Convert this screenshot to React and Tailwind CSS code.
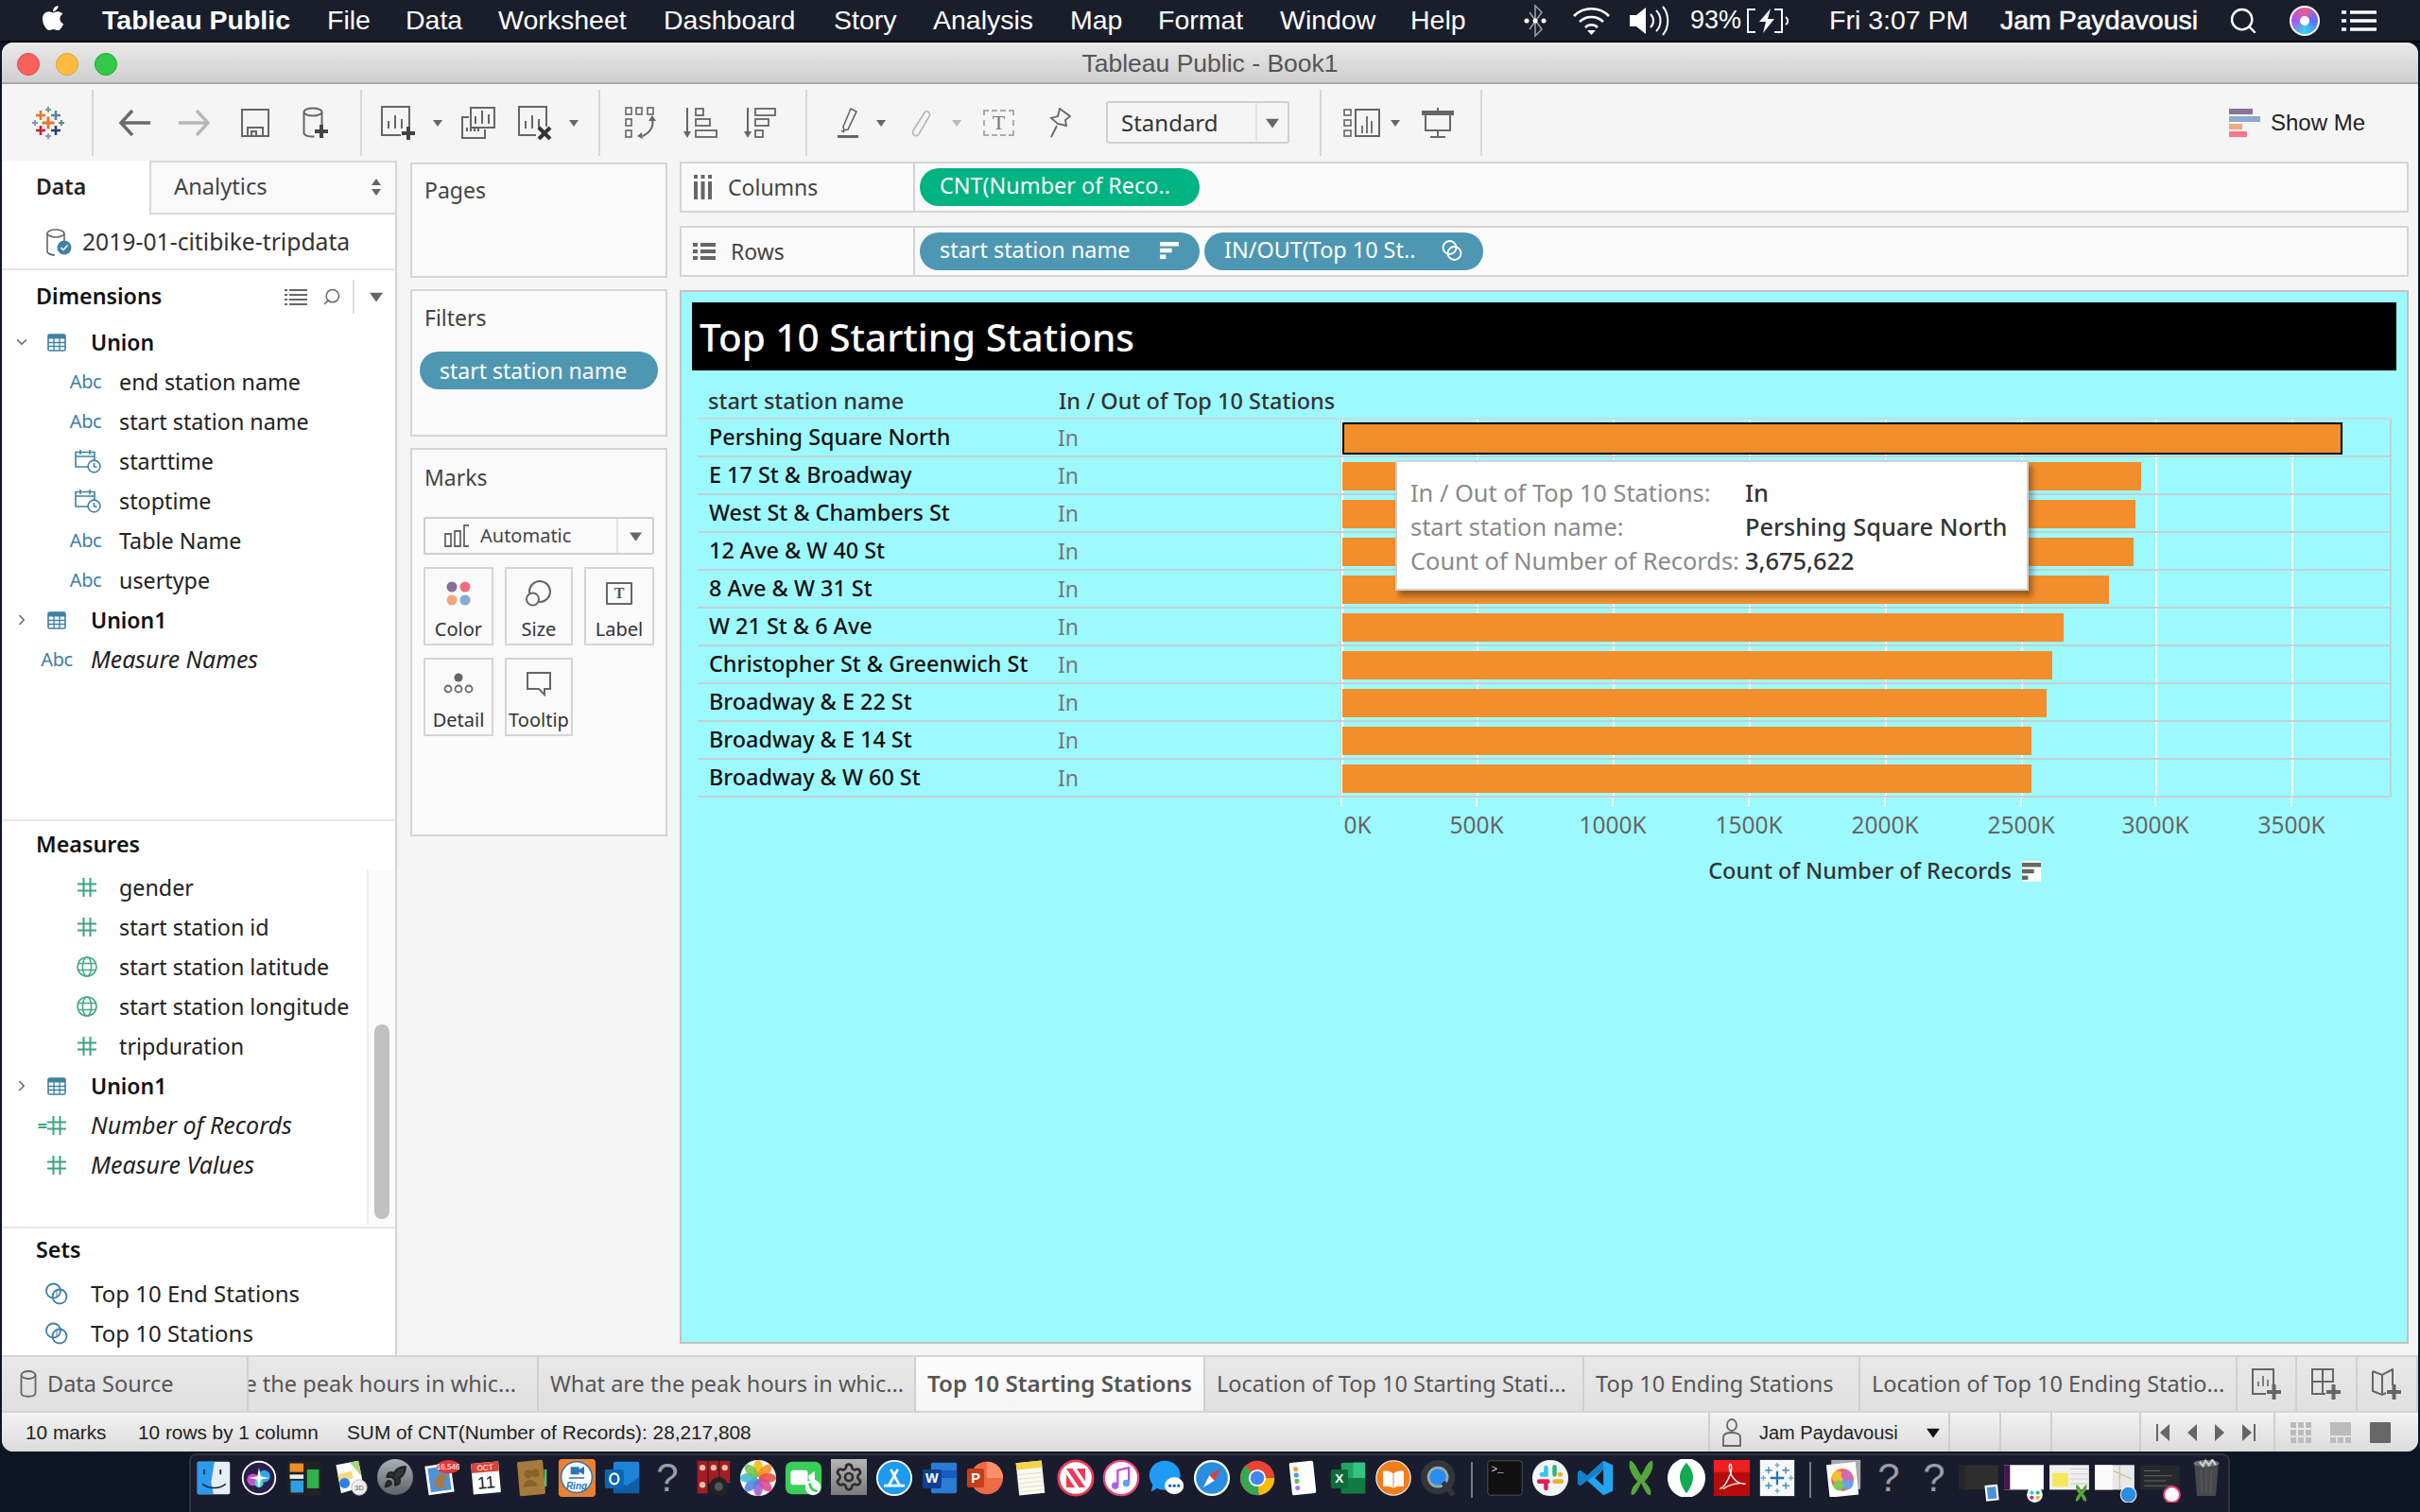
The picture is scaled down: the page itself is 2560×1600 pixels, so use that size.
import React from "react";
import { FaApple } from "react-icons/fa";
import { Search, Rocket, Settings, ChevronDown, ChevronRight } from "lucide-react";

const G = "#666";

function Caret({ c = "#666", s = 10 }) {
  return (
    <svg width={s} height={s} viewBox="0 0 10 10" className="shrink-0">
      <path d="M0 2h10L5 9z" fill={c} />
    </svg>
  );
}
function Sep() {
  return <div className="w-[2px] h-[70px] bg-[#d8d8d8] shrink-0" />;
}
function SortBars({ c = "#666", w = 22, h = 20 }) {
  return (
    <svg width={w} height={h} viewBox="0 0 22 20" className="shrink-0">
      <rect x="0" y="0" width="22" height="5" fill={c} />
      <rect x="0" y="7.5" width="14" height="5" fill={c} />
      <rect x="0" y="15" width="7" height="5" fill={c} />
    </svg>
  );
}
function SetIcon({ c = "#3f7fa5" }) {
  return (
    <svg width="26" height="24" viewBox="0 0 26 24" className="shrink-0">
      <path d="M13 8a7.5 7.5 0 0 1 0 8a7.5 7.5 0 0 1 0-8" fill={c} fillOpacity=".5" />
      <circle cx="9.5" cy="9" r="7.5" fill="none" stroke={c} strokeWidth="1.8" />
      <circle cx="16" cy="15" r="7.5" fill="none" stroke={c} strokeWidth="1.8" />
    </svg>
  );
}
function TableIcon() {
  return (
    <svg width="20" height="19" viewBox="0 0 20 19" className="shrink-0">
      <rect x="1" y="1" width="18" height="17" rx="1.5" fill="#fff" stroke="#3f80a3" strokeWidth="1.6" />
      <rect x="1" y="1" width="18" height="4.5" fill="#3f80a3" />
      <path d="M1 9.5h18M1 13.5h18M7 5v13M13 5v13" stroke="#3f80a3" strokeWidth="1.3" />
    </svg>
  );
}
function Hash({ c = "#3fa580" }) {
  return (
    <svg width="20" height="20" viewBox="0 0 20 20" className="shrink-0">
      <path d="M6.5 0v20M13.5 0v20M0 6.5h20M0 13.5h20" stroke={c} strokeWidth="2" />
    </svg>
  );
}
function Globe() {
  return (
    <svg width="22" height="22" viewBox="0 0 22 22" className="shrink-0" fill="none" stroke="#48a985" strokeWidth="1.6">
      <circle cx="11" cy="11" r="10" />
      <ellipse cx="11" cy="11" rx="4.6" ry="10" />
      <path d="M1 7.5h20M1 14.5h20" />
    </svg>
  );
}
function DateIcon() {
  return (
    <svg width="29" height="26" viewBox="0 0 29 26" className="shrink-0" fill="none" stroke="#3f80a3" strokeWidth="1.6">
      <path d="M15 19H2V3.5h20V12" />
      <path d="M2 8h20M7 1v5M17 1v5" />
      <circle cx="21.5" cy="18.5" r="6.4" fill="#fff" />
      <path d="M21.5 15v4h3" />
    </svg>
  );
}
function Abc({ cls = "" }) {
  return (
    <span className={"text-[20px] tracking-[-0.4px] text-[#3e80a5] leading-none " + cls}>
      Abc
    </span>
  );
}
function L1({ icon, children }) {
  return (
    <div className="flex h-[42px] items-center">
      <div className="w-[124px] shrink-0 flex items-center justify-center h-full">
        <span className="ml-[56px] flex w-[32px] justify-center">{icon}</span>
      </div>
      <span className="whitespace-nowrap text-[23.3px]">{children}</span>
    </div>
  );
}
function L0({ icon, chev, children, cls = "" }) {
  return (
    <div className="flex h-[42px] items-center">
      <div className="w-[41px] flex justify-center shrink-0">{chev}</div>
      <div className="w-[34px] flex justify-center shrink-0">{icon}</div>
      <div className="w-[19px] shrink-0" />
      <span className={"whitespace-nowrap " + cls}>{children}</span>
    </div>
  );
}

function TableauLogo({ size = 1 }) {
  const P = ({ x, y, r, c, w = 2.6 }) => (
    <path d={`M${x - r} ${y}h${2 * r}M${x} ${y - r}v${2 * r}`} stroke={c} strokeWidth={w} fill="none" />
  );
  return (
    <svg width={34 * size} height={34 * size} viewBox="-17 -17 34 34" className="shrink-0">
      <P x={0} y={0} r={6.5} c="#e8762c" w={3} />
      <P x={-8} y={-8} r={5} c="#e8762c" />
      <P x={8} y={-8} r={5} c="#5b879b" />
      <P x={0} y={-14} r={3} c="#7199a6" w={2} />
      <P x={-14} y={0} r={3} c="#7a9bb5" w={2} />
      <P x={14} y={0} r={3} c="#59879b" w={2} />
      <P x={-8} y={8} r={5} c="#c72035" />
      <P x={8} y={8} r={5} c="#1f447a" />
      <P x={0} y={14} r={3} c="#9098ad" w={2} />
    </svg>
  );
}
const Svg = ({ w, h, children, vb }) => (
  <svg width={w} height={h} viewBox={vb || `0 0 ${w} ${h}`} className="shrink-0" fill="none">
    {children}
  </svg>
);
function PlusMark({ x, y, r = 7 }) {
  return <path d={`M${x - r} ${y}h${2 * r}M${x} ${y - r}v${2 * r}`} stroke="#444" strokeWidth="4" />;
}
function BarsIn({ x, y }) {
  return <path d={`M${x} ${y + 14}v-8M${x + 7} ${y + 14}v-14M${x + 14} ${y + 14}v-10`} stroke={G} strokeWidth="2" />;
}
function Toolbar() {
  return (
    <div className="h-[81px] bg-[#f5f5f5] flex items-center shrink-0 relative">
      <div className="ml-[32px]"><TableauLogo /></div>
      <div className="ml-[29px]"><Sep /></div>
      <div className="ml-[26px]">
        <Svg w={34} h={30}><path d="M15 2L3 15l12 13M3 15h31" stroke="#6a6a6a" strokeWidth="3.4" /></Svg>
      </div>
      <div className="ml-[30px]">
        <Svg w={34} h={30}><path d="M19 2l12 13-12 13M31 15H0" stroke="#b8b8b8" strokeWidth="3.4" /></Svg>
      </div>
      <div className="ml-[31px]">
        <Svg w={32} h={32}>
          <path d="M2 2h28v28H2z" stroke={G} strokeWidth="2" />
          <path d="M8 30V21h16v9M12 30v-5h5v5" stroke={G} strokeWidth="2" />
        </Svg>
      </div>
      <div className="ml-[34px]">
        <Svg w={28} h={34}>
          <ellipse cx="11" cy="5.5" rx="9.5" ry="4" stroke={G} strokeWidth="2" />
          <path d="M1.5 6v22a9 4 0 0 0 11 3.5M20.5 6v13" stroke={G} strokeWidth="2" />
          <PlusMark x={20} y={26} />
        </Svg>
      </div>
      <div className="ml-[33px]"><Sep /></div>
      <div className="ml-[20px]">
        <Svg w={36} h={36}>
          <path d="M30 26V1H1v30h20" stroke={G} strokeWidth="2" />
          <BarsIn x={8} y={10} />
          <PlusMark x={29} y={29} />
        </Svg>
      </div>
      <div className="ml-[19px]"><Caret /></div>
      <div className="ml-[20px]">
        <Svg w={36} h={34}>
          <path d="M10 1h25v21H10z" stroke={G} strokeWidth="2" />
          <BarsIn x={15} y={4} />
          <path d="M8 11H1v22h24v-9" stroke={G} strokeWidth="2" />
          <path d="M6 26v-4M10 26v-4M14 26v-4M18 26v-4" stroke={G} strokeWidth="2" />
        </Svg>
      </div>
      <div className="ml-[24px]">
        <Svg w={36} h={36}>
          <path d="M30 22V1H1v30h18" stroke={G} strokeWidth="2" />
          <BarsIn x={8} y={10} />
          <path d="M22 23l12 12M34 23L22 35" stroke="#333" strokeWidth="4" />
        </Svg>
      </div>
      <div className="ml-[18px]"><Caret /></div>
      <div className="ml-[21px]"><Sep /></div>
      <div className="ml-[26px]">
        <Svg w={34} h={34}>
          <g stroke={G} strokeWidth="1.6">
            <rect x="1" y="1" width="6" height="7" /><rect x="12" y="1" width="6" height="7" /><rect x="24" y="1" width="6" height="7" />
            <rect x="1" y="13" width="6" height="7" /><rect x="1" y="25" width="6" height="7" />
          </g>
          <path d="M29 12c2 9-2 15-10 19" stroke={G} strokeWidth="2" />
          <path d="M25 15l4-6 4 6zM18 27l-5 4 6 3z" fill={G} />
        </Svg>
      </div>
      <div className="ml-[28px]">
        <Svg w={36} h={34}>
          <path d="M4 1v28" stroke={G} strokeWidth="2" />
          <path d="M0 26h8l-4 7z" fill={G} />
          <g stroke={G} strokeWidth="1.8">
            <rect x="13" y="2" width="8" height="7" /><rect x="13" y="13" width="15" height="7" /><rect x="13" y="25" width="22" height="7" />
          </g>
        </Svg>
      </div>
      <div className="ml-[28px]">
        <Svg w={34} h={34}>
          <path d="M4 1v28" stroke={G} strokeWidth="2" />
          <path d="M0 26h8l-4 7z" fill={G} />
          <g stroke={G} strokeWidth="1.8">
            <rect x="12" y="2" width="21" height="7" /><rect x="12" y="13" width="14" height="7" /><rect x="12" y="25" width="8" height="7" />
          </g>
        </Svg>
      </div>
      <div className="ml-[31px]"><Sep /></div>
      <div className="ml-[32px]">
        <Svg w={23} h={34}>
          <path d="M14 2l6 3-9 19-4 1-1-4z" stroke={G} strokeWidth="1.6" />
          <path d="M4 25l3 2" stroke={G} strokeWidth="2" />
          <rect x="0" y="30" width="22" height="3" fill={G} />
        </Svg>
      </div>
      <div className="ml-[18px]"><Caret /></div>
      <div className="ml-[25px]">
        <Svg w={24} h={32}>
          <path d="M17 4L4 24c-2 4 3 8 6 4L21 9c2-4-3-7-5-4L6 21" stroke="#b8b8b8" strokeWidth="1.6" />
        </Svg>
      </div>
      <div className="ml-[21px]"><Caret c="#bbb" /></div>
      <div className="ml-[23px] w-[33px] h-[28px] border-2 border-dashed border-[#aaa] flex items-center justify-center text-[22px] text-[#777] font-['Liberation_Serif',serif] leading-none">
        T
      </div>
      <div className="ml-[35px]">
        <Svg w={25} h={32}>
          <path d="M13 1l11 8-5 4 1 6-9-2-7-6 7-2zM10 19L4 31" stroke={G} strokeWidth="1.8" />
        </Svg>
      </div>
      <div className="ml-[37px] w-[194px] h-[45px] border-2 border-[#cfcfcf] rounded-[3px] flex items-center text-[24px] text-[#333]">
        <span className="w-[156px] pl-[14px]">Standard</span>
        <div className="w-[2px] h-full bg-[#e4e4e4]" />
        <div className="flex-1 flex justify-center"><Caret s={14} /></div>
      </div>
      <div className="ml-[32px]"><Sep /></div>
      <div className="ml-[23px]">
        <Svg w={39} h={30}>
          <g stroke={G} strokeWidth="1.6">
            <rect x="1" y="1" width="7" height="6" /><rect x="1" y="12" width="7" height="6" /><rect x="1" y="23" width="7" height="6" />
          </g>
          <path d="M13 1h25v28H13z" stroke={G} strokeWidth="2" />
          <path d="M20 26v-8M25 26V8M30 26v-13" stroke={G} strokeWidth="1.8" />
        </Svg>
      </div>
      <div className="ml-[11px]"><Caret /></div>
      <div className="ml-[23px]">
        <Svg w={34} h={32}>
          <rect x="0" y="3" width="34" height="5" fill={G} />
          <path d="M17 0v3M4 8v16h26V8M17 24v7M9 31h16" stroke={G} strokeWidth="2" />
        </Svg>
      </div>
      <div className="ml-[28px]"><Sep /></div>
      <div className="ml-auto mr-[56px] flex items-center">
        <Svg w={33} h={30}>
          <rect x="0" y="0" width="25" height="6" fill="#8a7399" />
          <rect x="0" y="8" width="33" height="6" fill="#8aabcf" />
          <rect x="0" y="16" width="14" height="6" fill="#f3aa7e" />
          <rect x="0" y="24" width="19" height="6" fill="#f9778a" />
        </Svg>
        <span className="ml-[11px] text-[24px] text-[#222] font-['Liberation_Sans',sans-serif]">Show Me</span>
      </div>
    </div>
  );
}

function Menu() {
  const items = [
    ["File", "w-[83px]"],
    ["Data", "w-[98px]"],
    ["Worksheet", "w-[175px]"],
    ["Dashboard", "w-[180px]"],
    ["Story", "w-[105px]"],
    ["Analysis", "w-[145px]"],
    ["Map", "w-[93px]"],
    ["Format", "w-[129px]"],
    ["Window", "w-[138px]"],
    ["Help", "w-[100px]"],
  ];
  return (
    <div className="h-[45px] bg-[#1a1e2b] border-b-2 border-black flex items-center text-white text-[28.5px] font-['Liberation_Sans',sans-serif] shrink-0 relative">
      <div className="ml-[41px] w-[67px]"><FaApple size={30} color="#fff" className="-mt-[5px]" /></div>
      <span className="w-[238px] font-bold">Tableau Public</span>
      {items.map(([t, w]) => (
        <span key={t} className={w}>{t}</span>
      ))}
      <div className="ml-auto flex items-center">
        <Svg w={24} h={36}>
          <path d="M6 9l13 18-7 7V2l7 7L6 27" stroke="#9a9ca3" strokeWidth="1.6" />
          <circle cx="3" cy="18" r="2.5" fill="#fff" /><circle cx="12" cy="18" r="2.5" fill="#fff" /><circle cx="21" cy="18" r="2.5" fill="#fff" />
        </Svg>
        <div className="ml-[27px]">
          <Svg w={41} h={30}>
            <path d="M2 10a26 26 0 0 1 37 0M8 16a18 18 0 0 1 25 0M14 22a9 9 0 0 1 13 0" stroke="#fff" strokeWidth="2.6" />
            <path d="M16 25h9l-4.500 5z" fill="#fff" />
          </Svg>
        </div>
        <div className="ml-[20px]">
          <Svg w={42} h={32}>
            <path d="M0 10h7l10-8v28L7 22H0z" fill="#fff" />
            <path d="M22 9c4 4 4 10 0 14M28 5c6 6 6 16 0 22M35 1c7 8 7 22 0 30" stroke="#fff" strokeWidth="2" />
          </Svg>
        </div>
        <span className="ml-[22px] w-[59px] text-[27px]">93%</span>
        <Svg w={46} h={26}>
          <path d="M10 1H2v24h8M30 1h8v24h-8" stroke="#fff" strokeWidth="2" />
          <path d="M26 0L14 14h7l-3 12 12-15h-7z" fill="#fff" />
          <path d="M42 9c3 2 3 6 0 8" stroke="#fff" strokeWidth="2" />
        </Svg>
        <span className="ml-[42px] w-[181px]">Fri 3:07 PM</span>
        <span className="w-[241px] [-webkit-text-stroke:0.5px_white]">Jam Paydavousi</span>
        <Search size={32} color="#fff" strokeWidth={1.8} />
        <div className="ml-[33px] w-[32px] h-[32px] rounded-full border-2 border-white bg-[conic-gradient(#e85d8c,#5b6cff,#35d5e8,#a855f7,#e85d8c)] flex items-center justify-center">
          <div className="w-[10px] h-[10px] bg-white rounded-full" />
        </div>
        <div className="ml-[23px] mr-[46px]">
          <Svg w={37} h={22}>
            <path d="M0 2h5M9 2h28M0 11h5M9 11h28M0 20h5M9 20h28" stroke="#fff" strokeWidth="3.5" />
          </Svg>
        </div>
      </div>
    </div>
  );
}

function DataPane() {
  return (
    <div className="w-[418px] shrink-0 bg-white border-r-2 border-[#d4d4d4] flex flex-col text-[#222]">
      <div className="h-[57px] flex shrink-0">
        <div className="w-[156px] pl-[36px] flex items-center pb-[2px] text-[23px] font-semibold text-[#222]">Data</div>
        <div className="flex-1 bg-[#f9f9f9] border-l-2 border-b-2 border-t-2 border-[#d8d8d8] flex items-center pl-[24px] pb-[2px] text-[23.7px] text-[#444]">
          Analytics
          <svg width="12" height="18" viewBox="0 0 12 18" className="ml-auto mr-[14px]"><path d="M6 0l5 7H1zM6 18l5-7H1z" fill="#666" /></svg>
        </div>
      </div>
      <div className="h-[59px] shrink-0 border-b-2 border-[#e6e6e6] flex items-center">
        <div className="ml-[46px] w-[40px] relative">
          <Svg w={30} h={30}>
            <ellipse cx="11" cy="6" rx="9" ry="4" stroke={G} strokeWidth="1.6" />
            <path d="M2 6v19c0 3 6 4 8 4M20 6v8" stroke={G} strokeWidth="1.6" />
            <circle cx="20" cy="21" r="7.500" fill="#3f80a3" />
            <path d="M16.500 21l2.500 2.500 4.500-5" stroke="#fff" strokeWidth="1.6" />
          </Svg>
        </div>
        <span className="text-[24.7px] text-[#333] -ml-[1px]">2019-01-citibike-tripdata</span>
      </div>

      <div className="h-[583px] shrink-0 border-b-2 border-[#e6e6e6] flex flex-col">
        <div className="h-[55px] flex items-center shrink-0 relative pl-[36px]">
          <span className="text-[23.3px] font-semibold text-[#111]">Dimensions</span>
          <div className="ml-auto flex items-center">
            <Svg w={24} h={18}>
              <path d="M0 2h3M5 2h19M0 7h3M5 7h19M0 12h3M5 12h19M0 17h3M5 17h19" stroke="#666" strokeWidth="2" />
            </Svg>
            <Search size={20} color="#666" strokeWidth={1.8} className="ml-[16px] -scale-x-100" />
            <div className="ml-[12px] w-[2px] h-[36px] bg-[#e0e0e0]" />
            <div className="ml-[16px] mr-[13px]"><Caret s={14} /></div>
          </div>
        </div>
        <L0 icon={<TableIcon />} chev={<ChevronDown size={18} color="#666" />} cls="text-[23px] font-semibold text-[#111]">Union</L0>
        <L1 icon={<Abc cls="-ml-[3px]" />}>end station name</L1>
        <L1 icon={<Abc cls="-ml-[3px]" />}>start station name</L1>
        <L1 icon={<DateIcon />}>starttime</L1>
        <L1 icon={<DateIcon />}>stoptime</L1>
        <L1 icon={<Abc cls="-ml-[3px]" />}>Table Name</L1>
        <L1 icon={<Abc cls="-ml-[3px]" />}>usertype</L1>
        <L0 icon={<TableIcon />} chev={<ChevronRight size={18} color="#666" />} cls="text-[23px] font-semibold text-[#111]">Union1</L0>
        <L0 icon={<Abc />} cls="text-[24.8px] italic">Measure Names</L0>
      </div>

      <div className="h-[431px] shrink-0 border-b-2 border-[#e6e6e6] relative flex flex-col">
        <div className="h-[49px] flex items-center pl-[36px] shrink-0">
          <span className="text-[23.3px] font-semibold text-[#111]">Measures</span>
        </div>
        <L1 icon={<Hash />}>gender</L1>
        <L1 icon={<Hash />}>start station id</L1>
        <L1 icon={<Globe />}>start station latitude</L1>
        <L1 icon={<Globe />}>start station longitude</L1>
        <L1 icon={<Hash />}>tripduration</L1>
        <L0 icon={<TableIcon />} chev={<ChevronRight size={18} color="#666" />} cls="text-[23px] font-semibold text-[#111]">Union1</L0>
        <L0 icon={<span className="flex items-center text-[#3fa580] text-[18px] font-bold -ml-[10px]">=<Hash /></span>} cls="text-[25px] italic">Number of Records</L0>
        <L0 icon={<Hash />} cls="text-[25px] italic">Measure Values</L0>
        <div className="absolute right-0 top-[51px] bottom-[2px] w-[30px] bg-[#fbfbfb] border-l-2 border-[#eee]">
          <div className="absolute left-[6px] top-[164px] w-[16px] h-[206px] rounded-full bg-[#c0c0c0]" />
        </div>
      </div>

      <div className="flex-1 flex flex-col overflow-hidden">
        <div className="h-[45px] flex items-center pl-[36px] shrink-0">
          <span className="text-[23.3px] font-semibold text-[#111]">Sets</span>
        </div>
        <div className="h-[3px] shrink-0" />
        <L0 icon={<SetIcon />} cls="text-[24px] text-[#222]">Top 10 End Stations</L0>
        <L0 icon={<SetIcon />} cls="text-[24px] text-[#222]">Top 10 Stations</L0>
      </div>
    </div>
  );
}

function Card({ label, icon }) {
  return (
    <div className="h-[83px] border-2 border-[#d4d4d4] flex flex-col items-center justify-between pb-[5px] pt-[11px] text-[20px] text-[#333]">
      <div className="h-[30px] flex items-center">{icon}</div>
      <span className="leading-none">{label}</span>
    </div>
  );
}
function Shelves() {
  const box = "border-2 border-[#d4d4d4] bg-[#fafafa] text-[#444] text-[23px]";
  return (
    <div className="w-[272px] ml-[14px] shrink-0 pt-[2px] flex flex-col gap-[12px]">
      <div className={box + " h-[122px] pl-[13px] pt-[10px]"}>Pages</div>
      <div className={box + " h-[156px] px-[8px]"}>
        <div className="pl-[5px] pt-[11px] h-[64px]">Filters</div>
        <div className="h-[40px] rounded-full bg-[#4e97b3] text-white pl-[21px] flex items-center">start station name</div>
      </div>
      <div className={box + " h-[411px] px-[12px]"}>
        <div className="pt-[12px] pl-[1px] h-[71px]">Marks</div>
        <div className="h-[40px] border-2 border-[#cfcfcf] rounded-[2px] flex items-center text-[20px] text-[#444]">
          <div className="ml-[20px] mr-[12px]">
            <Svg w={26} h={24}>
              <path d="M1 10h6v13H1zM11 7h6v16h-6zM21 1h6v22h-6z" stroke={G} strokeWidth="1.8" />
            </Svg>
          </div>
          Automatic
          <div className="ml-auto w-[38px] h-full border-l-2 border-[#e4e4e4] flex items-center justify-center"><Caret s={13} /></div>
        </div>
        <div className="grid grid-cols-[74px_72px_74px] gap-x-[12px] gap-y-[13px] mt-[13px]">
          <Card label="Color" icon={
            <Svg w={26} h={26}>
              <circle cx="6" cy="6" r="5.500" fill="#86709a" /><circle cx="20" cy="6" r="5.500" fill="#f46a83" />
              <circle cx="6" cy="20" r="5.500" fill="#f2a679" /><circle cx="20" cy="20" r="5.500" fill="#84abd2" />
            </Svg>} />
          <Card label="Size" icon={
            <Svg w={28} h={28}>
              <circle cx="15" cy="12" r="11" stroke={G} strokeWidth="2" fill="#fafafa" />
              <circle cx="7.500" cy="20" r="6.500" stroke={G} strokeWidth="2" fill="#fafafa" />
            </Svg>} />
          <Card label="Label" icon={
            <div className="w-[28px] h-[24px] border-2 border-[#666] rounded-[1px] text-[16px] font-['Liberation_Serif',serif] font-bold text-[#555] flex items-center justify-center leading-none">T</div>} />
          <Card label="Detail" icon={
            <Svg w={32} h={24}>
              <circle cx="16" cy="5" r="4.500" fill={G} />
              <circle cx="5" cy="17" r="3.500" stroke={G} strokeWidth="1.8" /><circle cx="16" cy="17" r="3.500" stroke={G} strokeWidth="1.8" /><circle cx="27" cy="17" r="3.500" stroke={G} strokeWidth="1.8" />
            </Svg>} />
          <Card label="Tooltip" icon={
            <Svg w={28} h={26}>
              <path d="M2 1h24v17h-6v6l-6-6H2z" stroke={G} strokeWidth="2" />
            </Svg>} />
        </div>
      </div>
    </div>
  );
}

const DATA = [
  ["Pershing Square North", 1058],
  ["E 17 St & Broadway", 845],
  ["West St & Chambers St", 839],
  ["12 Ave & W 40 St", 837],
  ["8 Ave & W 31 St", 811],
  ["W 21 St & 6 Ave", 763],
  ["Christopher St & Greenwich St", 751],
  ["Broadway & E 22 St", 745],
  ["Broadway & E 14 St", 729],
  ["Broadway & W 60 St", 729],
];
const TICKS = [
  ["0K", 0],
  ["500K", 143],
  ["1000K", 287],
  ["1500K", 431],
  ["2000K", 575],
  ["2500K", 719],
  ["3000K", 861],
  ["3500K", 1005],
];

function Viz() {
  return (
    <div className="flex-1 border-2 border-[#c2c2c2] bg-[#9cfaff] px-[11px] pt-[11px] relative min-h-0">
      <div className="h-[72px] bg-black text-white text-[40.5px] font-medium flex items-center pl-[8px] pt-[2px]">
        Top 10 Starting Stations
      </div>
      <div className="h-[50px] pl-[6px] flex items-end pb-[3px] text-[23.5px] font-medium text-[#333] leading-[30px]">
        <span className="pl-[11px] w-[382px]">start station name</span>
        <span>In / Out of Top 10 Stations</span>
      </div>
      <div className="ml-[6px] mr-[5px] relative border-t-2 border-[#c9dadd]">
        {DATA.map(([name, w], i) => (
          <div key={name} className="h-[40px] flex border-b-2 border-[#c4d0d3]">
            <span className="w-[381px] pl-[12px] text-[23.4px] font-medium text-[#111] leading-[36px] whitespace-nowrap">{name}</span>
            <span className="w-[299px] text-[23px] text-[#777] leading-[38px]">In</span>
            <div className="flex-1 border-l-2 border-r-2 border-[#c4d0d3] relative">
              {TICKS.map(([t, x]) => (
                <div key={t} className="absolute top-0 bottom-0 w-[2px] bg-white" style={{ left: x - 1 }} />
              ))}
              {i === 0 ? (
                <div className="absolute left-0 top-[3px] h-[34px] bg-[#f28e2b] border-2 border-black" style={{ width: w }} />
              ) : (
                <div className="absolute left-0 top-[5px] h-[30px] bg-[#f28e2b]" style={{ width: w }} />
              )}
            </div>
          </div>
        ))}
        <div className="h-[60px] relative text-[24.5px] text-[#666]">
          {TICKS.map(([t, x], i) => (
            <React.Fragment key={t}>
              <div className="absolute top-0 h-[10px] w-[2px] bg-white" style={{ left: 680 + x }} />
              <span className="absolute top-[14px] -translate-x-1/2 leading-[30px]" style={{ left: 681 + (i === 0 ? 17 : x) }}>{t}</span>
            </React.Fragment>
          ))}
        </div>
        <div className="h-[40px] flex justify-center items-center pl-[698px] -mt-[2px] text-[23.5px] font-medium text-[#333]">
          Count of Number of Records
          <span className="ml-[11px] bg-white inline-flex"><SortBars w={20} h={22} /></span>
        </div>
      </div>
      <div className="absolute left-[755px] top-[178px] w-[670px] h-[138px] bg-white border-2 border-[#d0d0d0] shadow-[4px_6px_6px_rgba(0,0,0,0.35)] pl-[14px] pt-[14px] text-[25.4px] leading-[36px] whitespace-nowrap">
        <div className="flex"><span className="w-[354px] text-[#8a8a8a]">In / Out of Top 10 Stations:</span><span className="font-medium text-[#333]">In</span></div>
        <div className="flex"><span className="w-[354px] text-[#8a8a8a]">start station name:</span><span className="font-medium text-[#333]">Pershing Square North</span></div>
        <div className="flex"><span className="w-[354px] text-[#8a8a8a]">Count of Number of Records:</span><span className="font-medium text-[#333]">3,675,622</span></div>
      </div>
    </div>
  );
}
function Pill({ c, w, children, icon }) {
  return (
    <div className="h-[40px] rounded-full text-white text-[23.4px] flex items-center pl-[21px] pr-[22px] pb-[2px] justify-between whitespace-nowrap" style={{ background: c, width: w }}>
      <span>{children}</span>
      {icon}
    </div>
  );
}
function RightCol() {
  const box = "h-[54px] shrink-0 border-2 border-[#d4d4d4] bg-[#fafafa] flex items-center text-[23px] text-[#444]";
  return (
    <div className="w-[1829px] ml-[13px] shrink-0 flex flex-col pt-[1px] pb-[12px] gap-[14px]">
      <div className={box}>
        <div className="w-[247px] shrink-0 flex items-center h-full border-r-2 border-[#d4d4d4]">
          <div className="ml-[12px] mr-[16px]">
            <Svg w={21} h={26}>
              <path d="M3 7v19M10.500 7v19M18 7v19" stroke={G} strokeWidth="4" />
              <path d="M3 0v4M10.500 0v4M18 0v4" stroke={G} strokeWidth="4" />
            </Svg>
          </div>
          Columns
        </div>
        <div className="ml-[5px]"><Pill c="#00b383" w={296}>CNT(Number of Reco..</Pill></div>
      </div>
      <div className={box}>
        <div className="w-[247px] shrink-0 flex items-center h-full border-r-2 border-[#d4d4d4]">
          <div className="ml-[12px] mr-[16px]">
            <Svg w={24} h={20}>
              <path d="M0 3h5M8 3h16M0 10h5M8 10h16M0 17h5M8 17h16" stroke={G} strokeWidth="4" />
            </Svg>
          </div>
          Rows
        </div>
        <div className="ml-[5px] flex gap-[5px]">
          <Pill c="#4e97b3" w={296} icon={<SortBars c="#fff" w={20} h={18} />}>start station name</Pill>
          <Pill c="#4e97b3" w={295} icon={
            <Svg w={22} h={24}>
              <circle cx="8.500" cy="9" r="7" stroke="#fff" strokeWidth="1.8" />
              <circle cx="13.500" cy="15" r="7" stroke="#fff" strokeWidth="1.8" />
            </Svg>}>IN/OUT(Top 10 St..</Pill>
        </div>
      </div>
      <Viz />
    </div>
  );
}

function Tabs() {
  const Tab = ({ w, cls = "", children }) => (
    <div className={"h-full shrink-0 flex items-center overflow-hidden border-r-2 border-[#d0d0d0] " + cls} style={{ width: w }}>
      {children}
    </div>
  );
  const NewIcon = ({ kind }) => (
    <Svg w={32} h={34}>
      {kind === 0 && <><path d="M23 19V1H1v26h14" stroke={G} strokeWidth="2" /><path d="M7 19v-5M12 19V8M17 19v-7" stroke={G} strokeWidth="1.6" /></>}
      {kind === 1 && <path d="M12 1H1v26h14M1 14h22V1H12v26" stroke={G} strokeWidth="2" />}
      {kind === 2 && <path d="M1 3l10 4 11-6v17M1 3v21l10 4 4-2M11 7v21" stroke={G} strokeWidth="2" />}
      <path d="M16 25h15M23.500 17v16" stroke={G} strokeWidth="4" />
    </Svg>
  );
  return (
    <div className="h-[61px] shrink-0 border-t-2 border-b-2 border-[#d4d4d4] bg-gradient-to-b from-[#e8e8e8] to-[#e0e0e0] flex text-[23.5px] text-[#555] whitespace-nowrap">
      <Tab w={261} cls="pl-[19px]">
        <Svg w={18} h={30}>
          <ellipse cx="9" cy="5" rx="7.500" ry="4" stroke={G} strokeWidth="1.8" />
          <path d="M1.500 5v19c0 5 15 5 15 0V5" stroke={G} strokeWidth="1.8" />
        </Svg>
        <span className="ml-[11px]">Data Source</span>
      </Tab>
      <Tab w={307} cls="justify-end pr-[22px]"><span>e the peak hours in whic...</span></Tab>
      <Tab w={399} cls="pl-[12px]">What are the peak hours in whic...</Tab>
      <Tab w={306} cls="pl-[12px] bg-gradient-to-b from-[#fcfcfc] to-[#f5f5f5] font-semibold text-[24.2px]">Top 10 Starting Stations</Tab>
      <Tab w={401} cls="pl-[12px]">Location of Top 10 Starting Stati...</Tab>
      <Tab w={292} cls="pl-[12px]">Top 10 Ending Stations</Tab>
      <Tab w={399} cls="pl-[12px]">Location of Top 10 Ending Statio...</Tab>
      <Tab w={63} cls="justify-center"><NewIcon kind={0} /></Tab>
      <Tab w={64} cls="justify-center"><NewIcon kind={1} /></Tab>
      <Tab w={64} cls="justify-center border-r-0"><NewIcon kind={2} /></Tab>
    </div>
  );
}
function Status() {
  const cell = "h-full shrink-0 flex items-center border-r-2 border-[#cfcfcf]";
  return (
    <div className="h-[41px] shrink-0 bg-gradient-to-b from-[#f2f2f2] to-[#dcdcdc] rounded-b-[12px] flex items-center text-[20.8px] text-[#222] whitespace-nowrap font-['Liberation_Sans',sans-serif]">
      <div className="w-[1807px] h-full shrink-0 flex items-center pl-[25px] border-r-2 border-[#cfcfcf]">
        <span className="w-[119px]">10 marks</span>
        <span className="w-[221px]">10 rows by 1 column</span>
        <span>SUM of CNT(Number of Records): 28,217,808</span>
      </div>
      <div className={cell + " w-[254px] pl-[12px]"}>
        <Svg w={22} h={30}>
          <ellipse cx="11" cy="7" rx="5" ry="6" stroke={G} strokeWidth="1.8" />
          <path d="M2 29V20c0-4 5-5 9-5s9 1 9 5v9z" stroke={G} strokeWidth="1.8" />
        </Svg>
        <span className="ml-[18px] text-[20px]">Jam Paydavousi</span>
        <div className="ml-[30px]"><Caret c="#111" s={14} /></div>
      </div>
      <div className={cell + " w-[54px]"} />
      <div className={cell + " w-[54px]"} />
      <div className={cell + " w-[94px]"} />
      <div className={cell + " w-[142px] pl-[16px] gap-[19px]"}>
        <Svg w={14} h={18}><path d="M1 0v18" stroke={G} strokeWidth="2" /><path d="M14 0v18L4 9z" fill={G} /></Svg>
        <Svg w={10} h={18}><path d="M10 0v18L0 9z" fill={G} /></Svg>
        <Svg w={10} h={18}><path d="M0 0v18L10 9z" fill={G} /></Svg>
        <Svg w={14} h={18}><path d="M13 0v18" stroke={G} strokeWidth="2" /><path d="M0 0v18L10 9z" fill={G} /></Svg>
      </div>
      <div className="flex-1 flex items-center pl-[16px] gap-[20px]">
        <Svg w={22} h={22}>
          <g fill="#bbb">
            {[0, 8, 16].map((y) => [0, 8, 16].map((x) => <rect key={x + "-" + y} x={x} y={y} width="6" height="6" />))}
          </g>
        </Svg>
        <Svg w={22} h={22}>
          <rect x="0" y="0" width="22" height="14" fill="#bbb" />
          {[0, 8, 16].map((x) => <rect key={x} x={x} y="16" width="6" height="6" fill="#bbb" />)}
        </Svg>
        <div className="w-[22px] h-[22px] bg-[#666] rounded-[1px]" />
      </div>
    </div>
  );
}

/* Dock icons */
const I = ({ children, vb = "0 0 44 44" }) => (
  <svg width="40" height="40" viewBox={vb} className="block">{children}</svg>
);
function Q() {
  return <span className="text-[42px] leading-[40px] font-['Liberation_Sans',sans-serif] font-light text-[#9a9da8] block text-center w-[40px]">?</span>;
}
function Thumb({ bg, side, badge }) {
  return (
    <svg width="46" height="46" viewBox="0 0 44 44" className="block">
      <rect x="1" y="6" width="40" height="25" fill={bg} />
      {side && <rect x="1" y="6" width="6" height="25" fill={side} />}
      {badge}
    </svg>
  );
}
const DOCK = [
  <I><rect x="3" y="3" width="38" height="38" rx="2" fill="#e6eef7" /><path d="M3 3h20l-4 24 3 14H3z" fill="#2a9bf0" /><path d="M11 12v6M30 12v6" stroke="#123" strokeWidth="2" /><path d="M9 29c7 6 20 6 27 0" stroke="#123" strokeWidth="1.6" fill="none" /></I>,
  <I><circle cx="22" cy="22" r="20" fill="#fff" /><circle cx="22" cy="22" r="18" fill="#2c1e4a" /><circle cx="15" cy="24" r="7" fill="#c44fd0" /><circle cx="28" cy="20" r="7" fill="#2ba8f0" /><circle cx="22" cy="28" r="5" fill="#40e0c8" /><path d="M22 10l2 10 10 2-10 2-2 10-2-10-10-2 10-2z" fill="#fff" /></I>,
  <I><rect x="2" y="2" width="40" height="40" rx="3" fill="#222" /><rect x="5" y="5" width="16" height="10" fill="#ef8c2e" /><rect x="5" y="18" width="16" height="5" fill="#eee" /><rect x="6" y="25" width="15" height="14" fill="#2f9fe0" /><rect x="25" y="12" width="14" height="22" fill="#2fb24b" /></I>,
  <I><path d="M6 7l26-5 6 30-26 8z" fill="#fff" /><path d="M22 4l10-2 4 18z" fill="#a6d877" /><path d="M8 18l16-4 2 8-16 6z" fill="#f5d97a" /><circle cx="16" cy="28" r="6" fill="#2f7fe8" /><circle cx="33" cy="33" r="9" fill="#eee" stroke="#bbb" /><text x="33" y="36" fontSize="8" textAnchor="middle" fill="#555" fontFamily="Liberation Sans">3D</text></I>,
  <div className="w-[38px] h-[38px] rounded-full bg-gradient-to-b from-[#aab0b5] to-[#5d6368] flex items-center justify-center"><Rocket size={26} color="#222" fill="#333" /></div>,
  <I><g transform="rotate(-8 22 24)"><rect x="6" y="6" width="30" height="34" fill="#fff" /><rect x="9" y="9" width="24" height="28" fill="#4b92d9" /><path d="M12 30l10-14 8 4-6 8 4 8z" fill="#a9793f" /></g><ellipse cx="31" cy="9" rx="13" ry="8" fill="#e8353a" /><text x="31" y="12" fontSize="9" textAnchor="middle" fill="#fff" fontFamily="Liberation Sans">16,546</text></I>,
  <I><g transform="rotate(-5 22 22)"><rect x="6" y="4" width="32" height="36" fill="#fff" /><rect x="6" y="4" width="32" height="11" fill="#d9453a" /><text x="22" y="13" fontSize="9" textAnchor="middle" fill="#fff" fontFamily="Liberation Sans">OCT</text><text x="22" y="34" fontSize="20" textAnchor="middle" fill="#222" fontFamily="Liberation Sans">11</text></g></I>,
  <I><g transform="rotate(-5 22 22)"><rect x="7" y="2" width="30" height="40" rx="2" fill="#a67a3c" /><circle cx="19" cy="17" r="5" fill="#8a6229" /><circle cx="27" cy="17" r="5" fill="#8a6229" /><path d="M12 32c0-6 5-8 8-8s8 2 8 8z" fill="#8a6229" /></g><rect x="37" y="12" width="3" height="20" fill="#5dbb63" /></I>,
  <I><rect x="1" y="0" width="43" height="44" rx="4" fill="#f0802f" /><circle cx="22" cy="21" r="18" fill="#fff" stroke="#2a74b8" strokeWidth="1.6" /><rect x="15" y="9" width="10" height="9" rx="1" fill="#2a74b8" /><path d="M25 13l5-3v7l-5-3zM13 22h18" stroke="#2a74b8" strokeWidth="1.6" fill="#2a74b8" /><text x="22" y="35" fontSize="11" fontStyle="italic" fontWeight="700" textAnchor="middle" fill="#2a74b8" fontFamily="Liberation Sans">Ring</text></I>,
  <I><rect x="12" y="3" width="30" height="36" rx="2" fill="#1e82d8" /><path d="M12 21l15 10 15-10v19H12z" fill="#0f5fa8" /><rect x="2" y="12" width="22" height="22" rx="2" fill="#0a66b8" /><ellipse cx="13" cy="23" rx="5" ry="6" fill="none" stroke="#fff" strokeWidth="2.500" /></I>,
  <Q />,
  <I><rect x="4" y="2" width="12" height="38" fill="#a31d22" /><rect x="17" y="2" width="12" height="26" fill="#a31d22" /><rect x="30" y="2" width="12" height="26" fill="#a31d22" /><circle cx="10" cy="10" r="3.500" fill="#e5c0aa" /><circle cx="10" cy="30" r="3.500" fill="#e5c0aa" /><circle cx="23" cy="10" r="3.500" fill="#e5c0aa" /><circle cx="36" cy="10" r="3.500" fill="#e5c0aa" /><circle cx="29" cy="32" r="11" fill="#222" /><circle cx="29" cy="32" r="5" fill="#555" /></I>,
  <I><circle cx="22" cy="22" r="21" fill="#f6f6f6" />{["#f5b800","#f58a1f","#ec4b3c","#e33f86","#a259c9","#4d7fe0","#3cb8d8","#6cc24a"].map((c, i) => <ellipse key={c} cx="22" cy="11" rx="5.500" ry="10" fill={c} fillOpacity=".85" transform={`rotate(${i * 45} 22 22)`} />)}</I>,
  <I><rect x="1" y="3" width="42" height="38" rx="8" fill="#39cf57" /><rect x="7" y="13" width="20" height="17" rx="3" fill="#fff" /><path d="M28 19l7-5v14l-7-5z" fill="#fff" /><circle cx="33" cy="33" r="9" fill="#fff" /><path d="M29 28c1 6 4 9 9 9" stroke="#39cf57" strokeWidth="3" fill="none" /></I>,
  <div className="w-[38px] h-[38px] bg-gradient-to-b from-[#b5b5b5] to-[#7b7b7b] flex items-center justify-center"><Settings size={32} color="#2d2d2d" strokeWidth={2} /></div>,
  <I><circle cx="22" cy="22" r="21" fill="#fff" /><circle cx="22" cy="22" r="19" fill="#1d9bf0" /><path d="M10 31h24M18 12l11 20M26 12L15 32" stroke="#fff" strokeWidth="3" fill="none" /></I>,
  <I><rect x="12" y="4" width="30" height="36" rx="2" fill="#2b7cd3" /><rect x="12" y="13" width="30" height="9" fill="#185abd" /><rect x="2" y="12" width="22" height="22" rx="2" fill="#103f91" /><text x="13" y="28" fontSize="16" fontWeight="700" textAnchor="middle" fill="#fff" fontFamily="Liberation Sans">W</text></I>,
  <I><circle cx="24" cy="22" r="19" fill="#ed6c47" /><path d="M24 3a19 19 0 0 1 19 19H24z" fill="#ff8f6b" /><rect x="1" y="11" width="20" height="22" rx="2" fill="#c43e1c" /><text x="11" y="28" fontSize="16" fontWeight="700" textAnchor="middle" fill="#fff" fontFamily="Liberation Sans">P</text></I>,
  <I><g transform="rotate(-6 22 22)"><rect x="7" y="3" width="30" height="38" fill="#fbfaf0" /><rect x="7" y="3" width="30" height="8" fill="#f7d34a" /><path d="M7 17h30M7 22h30M7 27h30M7 32h30M7 37h30" stroke="#e2dfc8" strokeWidth="1" /></g></I>,
  <I><circle cx="22" cy="22" r="20" fill="#fff" stroke="#ef3a56" strokeWidth="3" /><path d="M11 11h7l15 22h-7zM11 33V18l10 15zM33 11v15L23 11z" fill="#ef3a56" /></I>,
  <I><circle cx="22" cy="22" r="20" fill="#fff" stroke="#f0427a" strokeWidth="2.500" /><path d="M18 30V13l13-3v17" stroke="#c44fd0" strokeWidth="2.500" fill="none" /><circle cx="15" cy="31" r="4" fill="#a862e6" /><circle cx="28" cy="28" r="4" fill="#5f9ff0" /></I>,
  <I><ellipse cx="20" cy="19" rx="18" ry="17" fill="#1f9bf5" /><path d="M6 29l-2 9 9-5z" fill="#1f9bf5" /><ellipse cx="31" cy="31" rx="11" ry="10" fill="#fff" /><circle cx="26" cy="31" r="1.800" fill="#1c62b9" /><circle cx="31" cy="31" r="1.800" fill="#1c62b9" /><circle cx="36" cy="31" r="1.800" fill="#1c62b9" /></I>,
  <I><circle cx="22" cy="22" r="21" fill="#fff" /><circle cx="22" cy="22" r="18.500" fill="#2a8ee0" /><path d="M32 11L19 19l6 6z" fill="#e83c33" /><path d="M12 33l7-14 6 6z" fill="#fff" /></I>,
  <I><circle cx="22" cy="22" r="20" fill="#ea4335" /><path d="M22 22L5 32a20 20 0 0 0 19 10z" fill="#34a853" /><path d="M22 22h20a20 20 0 0 1-18 20z" fill="#fbbc05" /><path d="M22 22L5 32A20 20 0 0 1 8 8z" fill="#34a853" /><circle cx="22" cy="22" r="10" fill="#fff" /><circle cx="22" cy="22" r="8" fill="#4285f4" /></I>,
  <I><g transform="rotate(-6 22 22)"><rect x="8" y="3" width="28" height="38" rx="2" fill="#fff" /><circle cx="15" cy="11" r="2.800" fill="#f59e2e" /><circle cx="15" cy="18" r="2.800" fill="#3d9ef2" /><circle cx="15" cy="25" r="2.800" fill="#52c25c" /><circle cx="15" cy="33" r="2.800" fill="#b47ade" /></g></I>,
  <I><rect x="14" y="4" width="28" height="36" rx="2" fill="#21a366" /><rect x="28" y="4" width="14" height="18" fill="#33c481" /><rect x="14" y="22" width="28" height="18" fill="#107c41" /><rect x="2" y="12" width="20" height="22" rx="2" fill="#0e6b3a" /><text x="12" y="28" fontSize="15" fontWeight="700" textAnchor="middle" fill="#fff" fontFamily="Liberation Sans">X</text></I>,
  <I><circle cx="22" cy="22" r="20" fill="#ee7f1a" stroke="#fff" strokeWidth="1.200" /><path d="M10 14c5-1 9 0 12 3 3-3 7-4 12-3v18c-5-1-9 0-12 2-3-2-7-3-12-2z" fill="#fff" /><path d="M22 17v17" stroke="#ee7f1a" /></I>,
  <I><circle cx="21" cy="21" r="20" fill="#33363c" /><circle cx="21" cy="21" r="11" fill="#2a8cf0" stroke="#9aa" strokeWidth="3" /><path d="M27 27l12 15" stroke="#33363c" strokeWidth="6" /></I>,
  "sep",
  <I><rect x="2" y="2" width="40" height="40" rx="3" fill="#111" stroke="#555" /><text x="6" y="15" fontSize="12" fill="#ddd" fontFamily="Liberation Mono">&gt;_</text></I>,
  <I><circle cx="22" cy="22" r="21" fill="#f4f4f4" /><path d="M17 10v8h-5M17 10" stroke="#36c5f0" strokeWidth="5" strokeLinecap="round" fill="none" /><path d="M27 9v9M27 18h0" stroke="#2eb67d" strokeWidth="5" strokeLinecap="round" /><path d="M34 18h-1M27 26h8" stroke="#ecb22e" strokeWidth="5" strokeLinecap="round" /><path d="M9 26h10M17 26v8" stroke="#e01e5a" strokeWidth="5" strokeLinecap="round" /></I>,
  <I><path d="M31 2l11 5v30l-11 5L12 25l-8 6-3-2V15l3-2 8 6zM31 12l-10 10 10 9z" fill="#23a4ef" fillRule="evenodd" /><path d="M31 2L12 19l-8-6-3 2v14l3 2L31 12z" fill="#0f6fb8" fillOpacity=".7" /></I>,
  <I><path d="M9 2c5 0 8 9 13 17 5-8 8-17 13-17 3 9-4 19-9 24 5 5 9 10 7 16-5 0-8-9-11-14-3 5-6 14-11 14-2-6 2-11 7-16C13 21 6 11 9 2z" fill="#57a63a" /></I>,
  <I><ellipse cx="22" cy="22" rx="22" ry="23" fill="#fff" /><path d="M22 4c7 8 9 15 7 22-1 5-4 9-6 13h-2c-2-4-5-8-6-13-2-7 0-14 7-22z" fill="#13aa52" /></I>,
  <I><rect x="1" y="1" width="42" height="42" fill="#b80b0b" /><path d="M1 1h42v14H1z" fill="#ee2020" /><path d="M8 34c4 1 10-10 13-18 1-5 1-10-1-10s-1 9 3 15c4 6 10 8 15 8-7-2-19 0-26 6" stroke="#fff" strokeWidth="1.500" fill="none" /></I>,
  <I><rect x="2" y="1" width="40" height="42" fill="#f8f8f8" />{[[22,22,8,2.500,"#2a74b0"],[12,13,4,1.800,"#4f9bc9"],[32,13,4,1.800,"#4f9bc9"],[12,31,4,1.800,"#4f9bc9"],[32,31,4,1.800,"#4f9bc9"],[22,7,3,1.500,"#6fa8c8"],[22,37,3,1.500,"#6fa8c8"],[6,22,3,1.500,"#6fa8c8"],[38,22,3,1.500,"#6fa8c8"]].map(([x,y,r,w,c]) => <path key={x+"-"+y} d={`M${x-r} ${y}h${2*r}M${x} ${y-r}v${2*r}`} stroke={c} strokeWidth={w} />)}</I>,
  "sep",
  <I><rect x="8" y="1" width="34" height="34" fill="#aaa" /><g transform="rotate(-6 22 24)"><rect x="4" y="5" width="34" height="38" fill="#fff" /><circle cx="21" cy="24" r="13" fill="#ec6a45" /><circle cx="16" cy="20" r="7" fill="#f5c02c" /><circle cx="26" cy="29" r="7" fill="#6f9fe8" /><circle cx="16" cy="30" r="6" fill="#7cc858" /><circle cx="26" cy="19" r="6" fill="#d066c0" /></g></I>,
  <Q />,
  <Q />,
  <Thumb bg="#2e2e2e" side="#262626" badge={<g transform="rotate(-6 36 34)"><rect x="28" y="26" width="13" height="16" fill="#fff" /><rect x="30" y="28" width="9" height="12" fill="#4b92d9" /></g>} />,
  <Thumb bg="#fff" side="#4a154b" badge={<g><circle cx="32" cy="36" r="8" fill="#fff" /><circle cx="29" cy="34" r="2" fill="#36c5f0" /><circle cx="35" cy="34" r="2" fill="#2eb67d" /><circle cx="29" cy="39" r="2" fill="#e01e5a" /><circle cx="35" cy="39" r="2" fill="#ecb22e" /></g>} />,
  <Thumb bg="#f0f0f0" badge={<g><rect x="4" y="14" width="16" height="14" fill="#f5e85c" /><path d="M22 10h18M22 15h18M22 20h18M22 25h18" stroke="#ccc" /><path d="M28 26c3 0 5 5 5 7 1-2 3-7 6-7 0 4-2 7-4 9 2 2 4 5 3 8-3 0-4-4-5-6-1 2-3 6-5 6-1-3 1-6 3-8-2-2-4-5-3-9z" fill="#57a63a" /></g>} />,
  <Thumb bg="#e8e8e8" badge={<g><rect x="1" y="6" width="18" height="25" fill="#fafafa" /><path d="M20 12l18 8M26 6v25" stroke="#c9b98a" /><circle cx="35" cy="36" r="8" fill="#2a8ee0" stroke="#fff" /></g>} />,
  <Thumb bg="#26282c" badge={<g><path d="M5 12h16M5 17h28M5 22h22M5 27h30" stroke="#666" /><circle cx="33" cy="36" r="8" fill="#fff" stroke="#f0427a" strokeWidth="2" /></g>} />,
  <I><path d="M8 5h28l-3 38H11z" fill="#48494d" /><ellipse cx="22" cy="5" rx="15" ry="4" fill="#6f7075" /><path d="M14 3l4 5 3-6 4 5 4-6 4 6" stroke="#ccc" strokeWidth="2.500" fill="none" /><path d="M16 12l1 28M22 12v28M28 12l-1 28" stroke="#5d5e62" /></I>,
];

function Dock() {
  return (
    <div className="flex-1 flex justify-start">
      <div className="ml-[200px] mt-[2px] w-[2159px] h-[64px] rounded-t-[8px] bg-[#181c2d] border-l-2 border-r-2 border-t-2 border-[#2f3342] flex items-start pt-[4px]">
        {DOCK.map((ic, i) =>
          ic === "sep" ? (
            <div key={i} className="w-[2px] h-[38px] mx-[10px] mt-[3px] bg-[#777a85] shrink-0" />
          ) : (
            <div key={i} className="w-[48px] shrink-0 flex justify-center">{ic}</div>
          )
        )}
      </div>
    </div>
  );
}

export default function App() {
  return (
    <div className="w-[2560px] h-[1600px] overflow-hidden bg-[#0e1626] flex flex-col font-['Noto_Sans',sans-serif]">
      <Menu />
      <div className="w-[2556px] ml-[2px] h-[1491px] shrink-0 flex flex-col rounded-t-[12px] rounded-b-[12px] bg-[#f5f5f5] overflow-hidden">
        <div className="h-[44px] shrink-0 pt-[3px] bg-gradient-to-b from-[#e9e9e9] to-[#cfcfcf] border-b-2 border-[#a8a8a8] flex items-center relative text-[#555] text-[26.5px]">
          <div className="ml-[16px] flex gap-[17px] absolute left-0">
            <div className="w-[24px] h-[24px] rounded-full bg-[#fc605c] border border-[#df4744]" />
            <div className="w-[24px] h-[24px] rounded-full bg-[#fdbc40] border border-[#dfa023]" />
            <div className="w-[24px] h-[24px] rounded-full bg-[#34c84a] border border-[#1aab29]" />
          </div>
          <span className="mx-auto font-['Liberation_Sans',sans-serif] leading-none">Tableau Public - Book1</span>
        </div>
        <Toolbar />
        <div className="flex-1 flex min-h-0">
          <DataPane />
          <Shelves />
          <RightCol />
        </div>
        <Tabs />
        <Status />
      </div>
      <Dock />
    </div>
  );
}
